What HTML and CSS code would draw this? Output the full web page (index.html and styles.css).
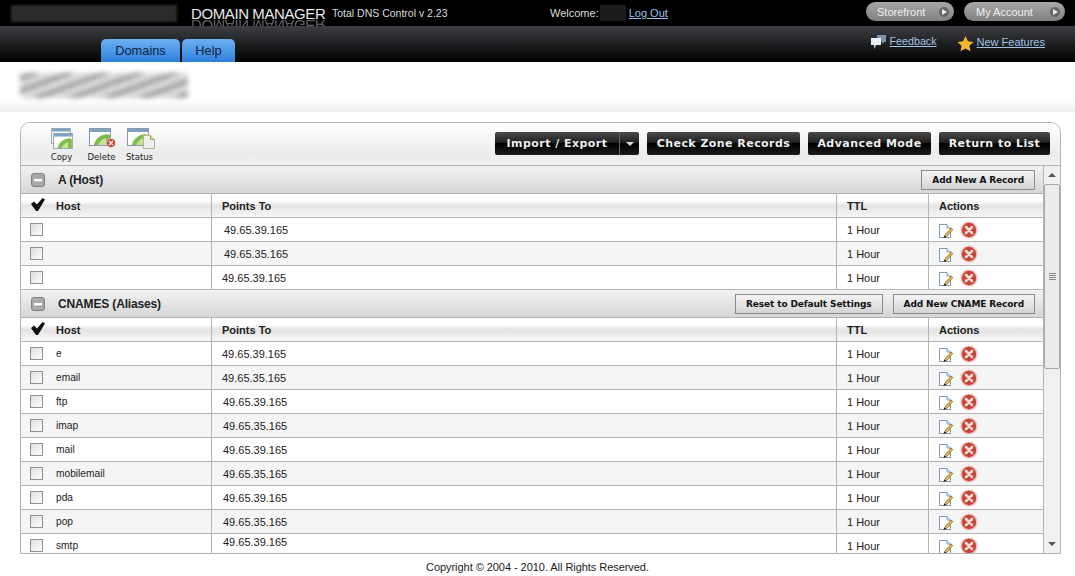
FILE: index.html
```html
<!DOCTYPE html>
<html lang="en">
<head>
    <meta charset="UTF-8">
    <meta name="viewport" content="width=device-width, initial-scale=1.0">
    <title>Domain Manager</title>
    <link rel="stylesheet" href="styles.css">
</head>
<body>
    <svg class="icon-defs" width="0" height="0">
        <defs>
            <symbol id="i-edit" viewBox="0 0 16 16">
                <path d="M1.500 1.500h7.500l3.500 3.500v9.500h-11z" fill="#fff" stroke="#7d9ab8" stroke-width="1"/>
                <path d="M9 1.500v3.500h3.500" fill="#e4edf5" stroke="#7d9ab8" stroke-width="1"/>
                <path d="M7 12l6-7 1.800 1.500-6 7-2.500 1z" fill="#e9b949" stroke="#7a5a20" stroke-width=".7"/>
                <path d="M5.500 15l.9-2.500 1.800 1.500z" fill="#222"/>
            </symbol>
            <symbol id="i-del" viewBox="0 0 18 18">
                <circle cx="9" cy="9" r="8.700" fill="#eec6bf"/>
                <circle cx="9" cy="9" r="7.200" fill="#c5453a"/>
                <path d="M6 6l6 6M12 6l-6 6" stroke="#f4dcd8" stroke-width="2.600" stroke-linecap="round"/>
            </symbol>
            <symbol id="i-win" viewBox="0 0 22 18">
                <rect x=".5" y=".5" width="21" height="17" fill="#fff" stroke="#8d9aa6"/>
                <rect x="1" y="1" width="20" height="3" fill="#7fa3c7"/>
                <path d="M5 17c1-6 6-10 13-11l3 1v10z" fill="#7dbb4b"/>
                <path d="M9 17c1-3 4-6 8-7v7z" fill="#c2e29a"/>
            </symbol>
            <symbol id="i-check" viewBox="0 0 14 13">
                <path d="M0 6l3-2.500 3 3L11.500 0 14 1.500 7 13H5z" fill="#111"/>
            </symbol>
            <symbol id="i-minus" viewBox="0 0 14 14">
                <rect x=".5" y=".5" width="13" height="13" rx="2.5" fill="#a9a9a9" stroke="#808080"/>
                <rect x="3" y="6" width="8" height="2.4" fill="#fff"/>
            </symbol>
        </defs>
    </svg>

    <header class="topbar">
        <div class="logo-blur"></div>
        <div class="brand" data-text="DOMAIN MANAGER">DOMAIN MANAGER</div>
        <div class="version">Total DNS Control v 2.23</div>
        <div class="welcome">Welcome:<span class="name-blur"></span><a href="#">Log Out</a></div>
        <div class="pills">
            <a class="pill pill-store" href="#">Storefront <span class="pill-arrow"></span></a>
            <a class="pill pill-account" href="#">My Account <span class="pill-arrow"></span></a>
        </div>
    </header>

    <nav class="navbar">
        <div class="tabs">
            <a class="tab tab-domains" href="#">Domains</a>
            <a class="tab tab-help" href="#">Help</a>
        </div>
        <div class="nav-links">
            <svg class="nav-icon feedback-icon" width="17" height="16" viewBox="0 0 17 16">
                <path d="M7 1h9v7h-2l-1 2-1-2H7z" fill="#7f93a8"/>
                <path d="M1 4h10v7H6l-1.500 4L4 11H1z" fill="#e8eef4"/>
            </svg>
            <a class="feedback-link" href="#">Feedback</a>
            <svg class="nav-icon star-icon" width="17" height="16" viewBox="0 0 17 16">
                <path d="M8.500 0l2.400 5.200 5.600.7-4.100 3.800 1.100 5.600-5-2.800-5 2.800 1.100-5.600L.5 5.900l5.600-.7z" fill="#f0b92e"/>
            </svg>
            <a class="features-link" href="#">New Features</a>
        </div>
    </nav>

    <div class="title-band"><div class="title-blur"></div></div>

    <main class="panel">
        <div class="toolbar">
            <div class="tool-icons">
                <div class="tool tool-copy">
                    <span class="tool-pic">
                        <svg class="win-back" width="20" height="16"><use href="#i-win"/></svg>
                        <svg class="win-front" width="20" height="16"><use href="#i-win"/></svg>
                    </span>
                    <span>Copy</span>
                </div>
                <div class="tool tool-delete">
                    <span class="tool-pic">
                        <svg class="win-back" width="22" height="18"><use href="#i-win"/></svg>
                        <svg class="win-badge" width="10" height="10"><use href="#i-del"/></svg>
                    </span>
                    <span>Delete</span>
                </div>
                <div class="tool tool-status">
                    <span class="tool-pic">
                        <svg class="win-back" width="22" height="18"><use href="#i-win"/></svg>
                        <svg class="win-badge doc" width="12" height="14" viewBox="0 0 12 14"><path d="M.5.5h7l4 4v9h-11z" fill="#eee" stroke="#b5b58a"/><path d="M7.500.5v4h4" fill="#dfe08a" stroke="#a3a35c"/></svg>
                    </span>
                    <span>Status</span>
                </div>
            </div>
            <div class="tool-buttons">
                <div class="dark-btn split"><span class="split-main">Import / Export</span><span class="split-arrow"></span></div>
                <a class="dark-btn btn-zone" href="#">Check Zone Records</a>
                <a class="dark-btn btn-advanced" href="#">Advanced Mode</a>
                <a class="dark-btn btn-return" href="#">Return to List</a>
            </div>
        </div>

        <div class="panel-body">
            <div class="records">
                <div class="section-head">
                    <svg class="minus" width="14" height="14"><use href="#i-minus"/></svg>
                    <h2>A (Host)</h2>
                    <button class="add-btn">Add New A Record</button>
                </div>
                <div class="row col-head">
                    <div class="cell cell-host"><svg class="check" width="14" height="13"><use href="#i-check"/></svg>Host</div>
                    <div class="cell">Points To</div>
                    <div class="cell">TTL</div>
                    <div class="cell">Actions</div>
                </div>
                <div class="row">
                    <div class="cell cell-host"><input type="checkbox"></div>
                    <div class="cell ip-far">49.65.39.165</div>
                    <div class="cell">1 Hour</div>
                    <div class="cell cell-actions"><svg class="edit" width="16" height="16"><use href="#i-edit"/></svg><svg width="18" height="18"><use href="#i-del"/></svg></div>
                </div>
                <div class="row alt">
                    <div class="cell cell-host"><input type="checkbox"></div>
                    <div class="cell ip-far">49.65.35.165</div>
                    <div class="cell">1 Hour</div>
                    <div class="cell cell-actions"><svg class="edit" width="16" height="16"><use href="#i-edit"/></svg><svg width="18" height="18"><use href="#i-del"/></svg></div>
                </div>
                <div class="row">
                    <div class="cell cell-host"><input type="checkbox"></div>
                    <div class="cell">49.65.39.165</div>
                    <div class="cell">1 Hour</div>
                    <div class="cell cell-actions"><svg class="edit" width="16" height="16"><use href="#i-edit"/></svg><svg width="18" height="18"><use href="#i-del"/></svg></div>
                </div>

                <div class="section-head">
                    <svg class="minus" width="14" height="14"><use href="#i-minus"/></svg>
                    <h2>CNAMES (Aliases)</h2>
                    <button class="add-btn">Reset to Default Settings</button>
                    <button class="add-btn">Add New CNAME Record</button>
                </div>
                <div class="row col-head">
                    <div class="cell cell-host"><svg class="check" width="14" height="13"><use href="#i-check"/></svg>Host</div>
                    <div class="cell">Points To</div>
                    <div class="cell">TTL</div>
                    <div class="cell">Actions</div>
                </div>
                <div class="row">
                    <div class="cell cell-host"><input type="checkbox">e</div>
                    <div class="cell">49.65.39.165</div>
                    <div class="cell">1 Hour</div>
                    <div class="cell cell-actions"><svg class="edit" width="16" height="16"><use href="#i-edit"/></svg><svg width="18" height="18"><use href="#i-del"/></svg></div>
                </div>
                <div class="row alt">
                    <div class="cell cell-host"><input type="checkbox">email</div>
                    <div class="cell">49.65.35.165</div>
                    <div class="cell">1 Hour</div>
                    <div class="cell cell-actions"><svg class="edit" width="16" height="16"><use href="#i-edit"/></svg><svg width="18" height="18"><use href="#i-del"/></svg></div>
                </div>
                <div class="row">
                    <div class="cell cell-host"><input type="checkbox">ftp</div>
                    <div class="cell ip-near">49.65.39.165</div>
                    <div class="cell">1 Hour</div>
                    <div class="cell cell-actions"><svg class="edit" width="16" height="16"><use href="#i-edit"/></svg><svg width="18" height="18"><use href="#i-del"/></svg></div>
                </div>
                <div class="row alt">
                    <div class="cell cell-host"><input type="checkbox">imap</div>
                    <div class="cell ip-near">49.65.35.165</div>
                    <div class="cell">1 Hour</div>
                    <div class="cell cell-actions"><svg class="edit" width="16" height="16"><use href="#i-edit"/></svg><svg width="18" height="18"><use href="#i-del"/></svg></div>
                </div>
                <div class="row">
                    <div class="cell cell-host"><input type="checkbox">mail</div>
                    <div class="cell ip-near">49.65.39.165</div>
                    <div class="cell">1 Hour</div>
                    <div class="cell cell-actions"><svg class="edit" width="16" height="16"><use href="#i-edit"/></svg><svg width="18" height="18"><use href="#i-del"/></svg></div>
                </div>
                <div class="row alt">
                    <div class="cell cell-host"><input type="checkbox">mobilemail</div>
                    <div class="cell ip-near">49.65.35.165</div>
                    <div class="cell">1 Hour</div>
                    <div class="cell cell-actions"><svg class="edit" width="16" height="16"><use href="#i-edit"/></svg><svg width="18" height="18"><use href="#i-del"/></svg></div>
                </div>
                <div class="row">
                    <div class="cell cell-host"><input type="checkbox">pda</div>
                    <div class="cell ip-near">49.65.39.165</div>
                    <div class="cell">1 Hour</div>
                    <div class="cell cell-actions"><svg class="edit" width="16" height="16"><use href="#i-edit"/></svg><svg width="18" height="18"><use href="#i-del"/></svg></div>
                </div>
                <div class="row alt">
                    <div class="cell cell-host"><input type="checkbox">pop</div>
                    <div class="cell ip-near">49.65.35.165</div>
                    <div class="cell">1 Hour</div>
                    <div class="cell cell-actions"><svg class="edit" width="16" height="16"><use href="#i-edit"/></svg><svg width="18" height="18"><use href="#i-del"/></svg></div>
                </div>
                <div class="row">
                    <div class="cell cell-host"><input type="checkbox">smtp</div>
                    <div class="cell ip-near ip-high">49.65.39.165</div>
                    <div class="cell">1 Hour</div>
                    <div class="cell cell-actions"><svg class="edit" width="16" height="16"><use href="#i-edit"/></svg><svg width="18" height="18"><use href="#i-del"/></svg></div>
                </div>
            </div>

            <div class="scrollbar">
                <div class="scroll-btn"><span class="arrow-up"></span></div>
                <div class="scroll-thumb"><span class="grip"></span></div>
                <div class="scroll-track"></div>
                <div class="scroll-btn"><span class="arrow-down"></span></div>
            </div>
        </div>
    </main>

    <footer class="copyright">Copyright &copy; 2004 - 2010. All Rights Reserved.</footer>
</body>
</html>
```

FILE: styles.css
```css
* {
    box-sizing: border-box;
}

html, body {
    height: 100%;
}

body {
    margin: 0;
    background-color: #fff;
    color: #222;
    font-family: "Liberation Sans", Arial, sans-serif;
    font-size: 11px;
    overflow: hidden;
}

.icon-defs {
    display: block;
    height: 0;
}

/* top black strip */
.topbar {
    display: flex;
    align-items: center;
    height: 26px;
    padding-left: 11px;
    background-color: #000;
    color: #ddd;
    overflow: hidden;
}

.logo-blur {
    width: 166px;
    height: 17px;
    background-color: #2a2a2a;
    filter: blur(1px);
}

.brand {
    position: relative;
    width: 141px;
    margin-left: 14px;
    color: #e8e8e8;
    font-size: 15px;
    letter-spacing: -0.4px;
    white-space: nowrap;
}

.brand::after {
    content: attr(data-text);
    position: absolute;
    left: 0;
    top: 12px;
    transform: scaleY(-1);
    opacity: 0.4;
}

.version {
    width: 218px;
    font-size: 10.500px;
    color: #ddd;
}

.welcome {
    display: flex;
    align-items: center;
    width: 316px;
    margin-top: -1px;
    font-size: 11px;
}

.name-blur {
    width: 26px;
    height: 16px;
    margin: 0 3px 0 1px;
    background-color: #1c1c1c;
}

.welcome a {
    color: #9cc0e8;
}

.pills {
    display: flex;
    gap: 10px;
}

.pill {
    display: flex;
    align-items: center;
    justify-content: space-between;
    height: 19px;
    margin-top: -3px;
    padding: 0 5px 0 11px;
    border-radius: 10px;
    background: linear-gradient(#a8a8a8, #808080);
    color: #eee;
    font-size: 11px;
    text-decoration: none;
}

.pill-store {
    width: 88px;
}

.pill-account {
    width: 101px;
    padding-left: 12px;
}

.pill-arrow {
    position: relative;
    width: 10px;
    height: 10px;
    border-radius: 50%;
    background-color: #666;
}

.pill-arrow::after {
    content: '';
    position: absolute;
    left: 3px;
    top: 2px;
    border-left: 5px solid #eee;
    border-top: 3px solid transparent;
    border-bottom: 3px solid transparent;
}

/* nav strip with tabs */
.navbar {
    display: flex;
    justify-content: space-between;
    height: 36px;
    padding-left: 101px;
    background: linear-gradient(#3c3e42, #000);
}

.tabs {
    display: flex;
    align-items: flex-end;
    gap: 2px;
}

.tab {
    height: 23px;
    padding-top: 4px;
    border-radius: 5px 5px 0 0;
    background: linear-gradient(#6cb0f2, #2f80dc);
    color: #10233f;
    font-size: 12.800px;
    text-align: center;
    text-decoration: none;
}

.tab-domains {
    width: 79px;
}

.tab-help {
    width: 53px;
}

.nav-links {
    display: flex;
    align-items: flex-start;
    padding-right: 30px;
    padding-top: 8px;
    font-size: 11px;
}

.nav-links a {
    color: #a5c2e4;
}

.feedback-link {
    margin-top: 1px;
    margin-left: 3px;
    margin-right: 20px;
    font-size: 10.700px;
}

.star-icon {
    margin-top: 2px;
}

.features-link {
    margin-left: 3px;
    margin-top: 2px;
}

/* blurred domain name */
.title-band {
    height: 50px;
    padding: 11px 0 0 20px;
    background: linear-gradient(#fff 76%, #ededed);
}

.title-blur {
    width: 168px;
    height: 25px;
    background: repeating-linear-gradient(160deg, #c4c4c4 0 4px, #777 4px 7px, #d8d8d8 7px 12px);
    filter: blur(2.500px);
    opacity: 0.85;
}

/* main panel */
.panel {
    height: 432px;
    margin: 10px 14px 0 20px;
    border: 1px solid #b4b4b4;
    border-radius: 10px 10px 0 0;
    overflow: hidden;
}

.toolbar {
    display: flex;
    justify-content: space-between;
    height: 43px;
    padding: 5px 10px 0 26px;
    border-bottom: 1px solid #b4b4b4;
    background: linear-gradient(#fff, #ebebeb 75%, #f2f2f2);
}

.tool-icons {
    display: flex;
}

.tool {
    display: flex;
    flex-direction: column;
    align-items: center;
    gap: 3px;
    color: #222;
    font-family: "DejaVu Sans", sans-serif;
    font-size: 8.500px;
}

.tool-copy {
    width: 29px;
}

.tool-delete {
    width: 35px;
    margin-left: 8px;
}

.tool-status {
    width: 33px;
    margin-left: 4px;
}

.tool-pic {
    position: relative;
    display: block;
    width: 27px;
    height: 21px;
}

.tool-copy .tool-pic .win-back {
    position: absolute;
    left: 3px;
    top: 0;
}

.win-front {
    position: absolute;
    left: 5px;
    top: 5px;
}

.tool-delete .win-back,
.tool-status .win-back {
    position: absolute;
    left: 1px;
    top: 0;
}

.win-badge {
    position: absolute;
    right: -1px;
    bottom: 1px;
}

.win-badge.doc {
    right: -2px;
    bottom: 0;
}

.tool-buttons {
    display: flex;
    align-items: flex-start;
    gap: 8px;
    padding-top: 4px;
}

.dark-btn {
    display: flex;
    align-items: center;
    justify-content: center;
    height: 23px;
    border-radius: 2px;
    background: linear-gradient(#4a4a4a, #222 45%, #000 50%, #1c1c1c);
    color: #eee;
    font-family: "DejaVu Sans", sans-serif;
    font-size: 11px;
    font-weight: bold;
    letter-spacing: 0.45px;
    text-decoration: none;
    white-space: nowrap;
}

.btn-zone {
    width: 153px;
}

.btn-advanced {
    width: 123px;
}

.btn-return {
    width: 111px;
}

.split {
    width: 144px;
}

.split-main {
    display: flex;
    align-items: center;
    justify-content: center;
    width: 125px;
    height: 23px;
    border-right: 1px solid #666;
}

.split-arrow {
    position: relative;
    width: 19px;
    height: 23px;
}

.split-arrow::after {
    content: '';
    position: absolute;
    left: 6px;
    top: 10px;
    border-top: 4px solid #ddd;
    border-left: 4px solid transparent;
    border-right: 4px solid transparent;
}

/* record lists */
.panel-body {
    display: flex;
    height: 387px;
}

.records {
    width: 1022px;
    overflow: hidden;
}

.section-head {
    display: flex;
    align-items: center;
    gap: 10px;
    height: 28px;
    padding: 0 8px 0 10px;
    border-bottom: 1px solid #b4b4b4;
    background: linear-gradient(#f2f2f2, #d6d6d6);
}

.section-head h2 {
    flex: 1;
    margin: 0 0 0 3px;
    font-size: 12px;
    font-weight: bold;
    letter-spacing: -0.15px;
    color: #222;
}

.add-btn {
    height: 20px;
    padding: 0 10px;
    border: 1px solid #8c8c8c;
    background: linear-gradient(#f4f4f4, #d4d4d4);
    color: #111;
    font-family: "DejaVu Sans", sans-serif;
    font-size: 9px;
    font-weight: bold;
    letter-spacing: -0.12px;
}

.row {
    display: grid;
    grid-template-columns: 191px 625px 92px 1fr;
    height: 24px;
    border-bottom: 1px solid #b4b4b4;
    background-color: #fff;
}

.row.alt {
    background-color: #f5f5f5;
}

.col-head {
    background: linear-gradient(#fff, #fff 30%, #e4e4e4 50%, #f6f6f6);
    font-weight: bold;
}

.cell {
    display: flex;
    align-items: center;
    padding-left: 10px;
    border-right: 1px solid #b4b4b4;
    white-space: nowrap;
}

.cell:last-child {
    border-right: none;
}

.cell-host {
    padding-left: 35px;
    font-size: 10.200px;
}

.col-head .cell-host {
    font-size: 11px;
}

.cell-host input {
    appearance: none;
    width: 13px;
    height: 13px;
    margin: 0 13px 0 -26px;
    border: 1px solid #8f8f8f;
    background: linear-gradient(135deg, #ddd, #fff);
}

.check {
    margin: -2px 11px 0 -25px;
}

.ip-far {
    padding-left: 12px;
}

.ip-near {
    padding-left: 11px;
}

.ip-high {
    padding-bottom: 8px;
}

.cell-actions {
    gap: 6px;
    padding-left: 9px;
}

.edit {
    margin-top: 3px;
}

.minus {
    flex-shrink: 0;
}

/* hand drawn scrollbar, same as old IE look */
.scrollbar {
    display: flex;
    flex-direction: column;
    flex: 1;
    border-left: 1px solid #b4b4b4;
    background-color: #f0f0f0;
}

.scroll-btn {
    display: flex;
    align-items: center;
    justify-content: center;
    height: 18px;
}

.arrow-up {
    border-bottom: 4px solid #555;
    border-left: 4px solid transparent;
    border-right: 4px solid transparent;
}

.arrow-down {
    border-top: 4px solid #555;
    border-left: 4px solid transparent;
    border-right: 4px solid transparent;
}

.scroll-thumb {
    display: flex;
    align-items: center;
    justify-content: center;
    height: 185px;
    border: 1px solid #a8a8a8;
    border-radius: 2px;
    background-color: #ececec;
}

.grip {
    width: 7px;
    height: 7px;
    background: repeating-linear-gradient(#888 0 1px, transparent 1px 2px);
}

.scroll-track {
    flex: 1;
}

.copyright {
    padding-top: 7px;
    color: #222;
    font-size: 11px;
    letter-spacing: -0.05px;
    text-align: center;
}
```
